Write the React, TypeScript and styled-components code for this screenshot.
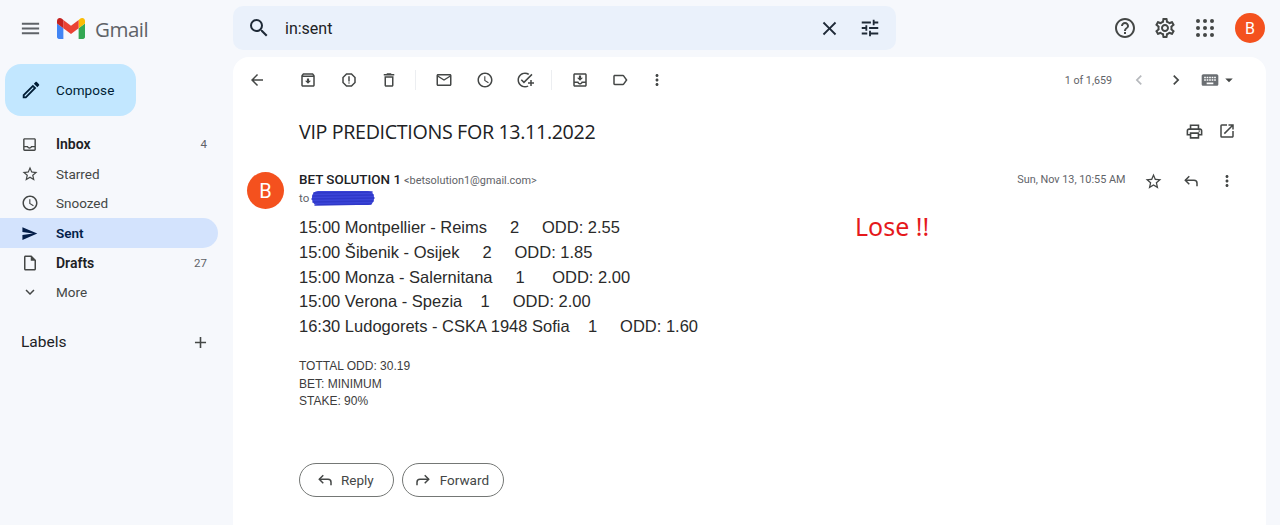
import React from "react";
import styled, { createGlobalStyle } from "styled-components";
import {
  MdMenu, MdSearch, MdClose, MdTune, MdHelpOutline, MdOutlineSettings,
  MdArrowBack, MdOutlineArchive, MdOutlineReport, MdOutlineDelete, MdOutlineEmail,
  MdOutlineWatchLater, MdOutlineAddTask, MdOutlineMoveToInbox, MdOutlineLabel,
  MdMoreVert, MdChevronLeft, MdChevronRight, MdKeyboard, MdArrowDropDown,
  MdOutlinePrint, MdOpenInNew, MdStarBorder, MdOutlineEdit, MdOutlineInbox,
  MdSend, MdOutlineInsertDriveFile, MdExpandMore, MdAdd,
} from "react-icons/md";

const Global = createGlobalStyle`
  html, body { margin: 0; padding: 0; height: 100%; overflow: hidden; }
  body { background: #f6f8fc; font-family: Roboto, "Liberation Sans", sans-serif; color: #202124; }
`;

const Page = styled.div`
  width: 1280px;
  height: 525px;
  overflow: hidden;
  display: grid;
  grid-template-columns: 233px 1033px 14px;
  grid-template-rows: 57px 468px;
  background: #f6f8fc;
`;

const Brand = styled.div`
  display: flex;
  align-items: center;
  height: 57px;
  padding-left: 19px;
  color: #5f6368;
`;

const LogoBox = styled.div`
  display: flex;
  margin-left: 15px;
`;

const Wordmark = styled.span`
  margin-left: 10px;
  font-family: "Open Sans", Roboto, sans-serif;
  font-size: 20.5px;
  letter-spacing: -0.5px;
  color: #5f6368;
`;

const SearchBar = styled.div`
  height: 44px;
  width: 663px;
  margin-top: 6px;
  background: #eaf1fb;
  border-radius: 10px;
  display: flex;
  align-items: center;
  padding: 0 15px 0 14px;
  box-sizing: border-box;
  color: #1f2a37;
`;

const SearchText = styled.span`
  flex: 1;
  margin-left: 14px;
  font-size: 16px;
  color: #202124;
`;

const CloseWrap = styled.span`
  display: flex;
  margin-right: -1px;
`;

const TuneWrap = styled.span`
  display: flex;
  margin-left: 19px;
`;

const TopRight = styled.div`
  grid-column: 2 / 4;
  grid-row: 1;
  display: flex;
  align-items: flex-start;
`;

const TopIcons = styled.div`
  margin-left: auto;
  margin-right: 15px;
  margin-top: 13px;
  display: flex;
  align-items: center;
  gap: 16px;
  color: #444746;
`;

const AccountAvatar = styled.div`
  width: 30px;
  height: 30px;
  margin-left: 2px;
  border-radius: 50%;
  background: #f4511e;
  color: #fff;
  font-size: 16px;
  display: flex;
  align-items: center;
  justify-content: center;
`;

const Sidebar = styled.nav`
  display: flex;
  flex-direction: column;
  align-items: flex-start;
`;

const Compose = styled.div`
  width: 131px;
  height: 52px;
  margin: 7px 0 13.5px 5px;
  border-radius: 16px;
  background: #c2e7ff;
  color: #001d35;
  display: flex;
  align-items: center;
  padding: 0 0 1px 15px;
  box-sizing: border-box;
  font-size: 13.5px;
  font-weight: 400;
  gap: 14px;
  letter-spacing: 0.1px;
`;

const NavRow = styled.div<{ $active?: boolean; $bold?: boolean }>`
  width: 218px;
  height: 29.6px;
  display: flex;
  align-items: center;
  padding: 0 11px 0 21px;
  box-sizing: border-box;
  border-radius: 0 15px 15px 0;
  background: ${(p) => (p.$active ? "#d3e3fd" : "transparent")};
  color: ${(p) => (p.$active ? "#041e49" : p.$bold ? "#202124" : "#444746")};
  font-size: ${(p) => (p.$bold ? 14 : 13.5)}px;
  font-weight: ${(p) => (p.$active || p.$bold ? 600 : 400)};
`;

const NavIcon = styled.span`
  width: 35px;
  display: flex;
  color: #444746;
`;

const SentIcon = styled(NavIcon)`
  color: #041e49;
`;

const NavLabel = styled.span`
  flex: 1;
`;

const Count = styled.span`
  font-size: 11.5px;
  font-weight: 400;
  color: #5f6368;
`;

const LabelsHead = styled.div`
  width: 218px;
  margin-top: 21px;
  padding: 0 8px 0 21px;
  box-sizing: border-box;
  display: flex;
  align-items: center;
  justify-content: space-between;
  font-size: 15.5px;
  color: #202124;
  height: 28px;
`;

const Panel = styled.main`
  background: #fff;
  border-radius: 16px 16px 0 0;
  display: flex;
  flex-direction: column;
`;

const Toolbar = styled.div`
  height: 46px;
  display: flex;
  align-items: center;
  padding-left: 15px;
  color: #444746;
`;

const ToolGroup = styled.div<{ $gap: number; $left: number }>`
  display: flex;
  align-items: center;
  gap: ${(p) => p.$gap}px;
  margin-left: ${(p) => p.$left}px;
`;

const Divider = styled.span`
  width: 1px;
  height: 20px;
  margin-left: 17px;
  background: #eceef1;
`;

const Pager = styled.div`
  margin-left: auto;
  margin-right: 28px;
  display: flex;
  align-items: center;
  font-size: 10.7px;
  color: #5f6368;
`;

const PagerText = styled.span`
  margin-right: 17px;
`;

const PagerIcon = styled.span<{ $faded?: boolean; $left?: number; $soft?: boolean }>`
  display: flex;
  margin-left: ${(p) => p.$left ?? 0}px;
  color: ${(p) => (p.$faded ? "#b6b9bd" : p.$soft ? "#6b6f73" : "#444746")};
`;

const SubjectRow = styled.div`
  display: flex;
  align-items: center;
  justify-content: space-between;
  height: 36px;
  margin-top: 10px;
  padding: 0 30px 0 66px;
`;

const Subject = styled.h1`
  margin: 0;
  font-family: "Open Sans", Roboto, sans-serif;
  font-weight: 400;
  font-size: 19.7px;
  letter-spacing: -0.35px;
  color: #202124;
`;

const SubjectIcons = styled.div`
  display: flex;
  align-items: center;
  gap: 14.5px;
  color: #444746;
`;

const MessageHead = styled.div`
  display: flex;
  margin-top: 22px;
  padding: 0 30px 0 14px;
`;

const SenderAvatar = styled.div`
  width: 37px;
  height: 37px;
  border-radius: 50%;
  background: #f4511e;
  color: #fff;
  font-size: 20px;
  display: flex;
  align-items: center;
  justify-content: center;
  margin-top: 1px;
  flex: none;
`;

const SenderBlock = styled.div`
  margin-left: 15px;
  flex: 1;
`;

const SenderLine = styled.div`
  font-size: 13.4px;
  line-height: 16px;
  margin-top: 1px;
`;

const SenderName = styled.strong`
  font-weight: 500;
  color: #202124;
`;

const SenderMail = styled.span`
  font-size: 10.9px;
  color: #5f6368;
  margin-left: 3px;
`;

const ToLine = styled.div`
  display: flex;
  align-items: center;
  font-size: 11.5px;
  color: #5f6368;
  height: 18px;
`;

const Scribble = styled.svg`
  margin-left: 2px;
  flex: none;
`;

const MetaRow = styled.div`
  display: flex;
  align-items: flex-start;
  gap: 18.5px;
  color: #444746;
`;

const DateText = styled.span`
  font-size: 10.85px;
  line-height: 16px;
  color: #5f6368;
  margin-top: 1px;
`;

const MetaIcon = styled.span`
  display: flex;
  margin-top: 1px;
`;

const BodyRow = styled.div`
  display: flex;
  margin-top: 6px;
  padding-left: 66px;
`;

const Lines = styled.div`
  width: 556px;
  font-family: "Liberation Sans", Arial, sans-serif;
  font-size: 16.5px;
  line-height: 24.75px;
  color: #2a2a2a;
  white-space: pre;
`;

const Lose = styled.div`
  font-family: "Noto Sans", "Open Sans", sans-serif;
  font-size: 25px;
  line-height: 24px;
  margin-top: -1px;
  color: #e5191c;
`;

const Summary = styled.div`
  margin: 19px 0 0 66px;
  font-family: "Liberation Sans", Arial, sans-serif;
  font-size: 12px;
  line-height: 17.8px;
  color: #3c3c3c;
`;

const Actions = styled.div`
  display: flex;
  gap: 8px;
  margin: 52px 0 0 66px;
`;

const ActionButton = styled.div<{ $l: number; $r: number; $g: number }>`
  height: 32px;
  border: 1px solid #747775;
  border-radius: 17px;
  display: flex;
  align-items: center;
  padding: 0 ${(p) => p.$r}px 0 ${(p) => p.$l}px;
  gap: ${(p) => p.$g}px;
  font-size: 13.5px;
  font-weight: 400;
  color: #444746;
`;

const Flip = styled.span`
  display: flex;
  transform: scaleX(-1);
`;

const GmailLogo = () => (
  <svg width="28" height="21" viewBox="52 42 88 66">
    <path fill="#4285f4" d="M58 108h14V74L52 59v43c0 3.32 2.69 6 6 6" />
    <path fill="#34a853" d="M120 108h14c3.32 0 6-2.69 6-6V59l-20 15" />
    <path fill="#fbbc04" d="M120 48v26l20-15v-8c0-7.42-8.47-11.65-14.4-7.2" />
    <path fill="#ea4335" d="M72 74V48l24 18 24-18v26L96 92" />
    <path fill="#c5221f" d="M52 51v8l20 15V48l-5.6-4.2c-5.94-4.45-14.4-.22-14.4 7.2" />
  </svg>
);

const ThinReply = ({ size = 18 }: { size?: number }) => (
  <svg width={size} height={size} viewBox="0 0 24 24" fill="none" stroke="currentColor" strokeWidth="2">
    <path d="M9.7 5.7 4.4 11l5.3 5.3" />
    <path d="M4.4 11H16c2.2 0 4 1.8 4 4v4" />
  </svg>
);

const DotGrid = () => (
  <svg width="24" height="24" viewBox="0 0 24 24" fill="currentColor">
    {[5, 12, 19].map((y) =>
      [5, 12, 19].map((x) => <circle key={`${x}-${y}`} cx={x} cy={y} r="2" />)
    )}
  </svg>
);

const rows = [
  "15:00 Montpellier - Reims     2     ODD: 2.55",
  "15:00 Šibenik - Osijek     2     ODD: 1.85",
  "15:00 Monza - Salernitana     1      ODD: 2.00",
  "15:00 Verona - Spezia    1     ODD: 2.00",
  "16:30 Ludogorets - CSKA 1948 Sofia    1     ODD: 1.60",
];

export default function App() {
  return (
    <Page>
      <Global />
      <Brand>
        <MdMenu size={23} />
        <LogoBox><GmailLogo /></LogoBox>
        <Wordmark>Gmail</Wordmark>
      </Brand>
      <TopRight>
        <SearchBar>
          <MdSearch size={24} />
          <SearchText>in:sent</SearchText>
          <CloseWrap><MdClose size={23} /></CloseWrap>
          <TuneWrap><MdTune size={22} /></TuneWrap>
        </SearchBar>
        <TopIcons>
          <MdHelpOutline size={24} />
          <MdOutlineSettings size={24} />
          <DotGrid />
          <AccountAvatar>B</AccountAvatar>
        </TopIcons>
      </TopRight>
      <Sidebar>
        <Compose><MdOutlineEdit size={22} />Compose</Compose>
        <NavRow $bold><NavIcon><MdOutlineInbox size={17} /></NavIcon><NavLabel>Inbox</NavLabel><Count>4</Count></NavRow>
        <NavRow><NavIcon><MdStarBorder size={18} /></NavIcon><NavLabel>Starred</NavLabel></NavRow>
        <NavRow><NavIcon><MdOutlineWatchLater size={18} /></NavIcon><NavLabel>Snoozed</NavLabel></NavRow>
        <NavRow $active><SentIcon><MdSend size={17} /></SentIcon><NavLabel>Sent</NavLabel></NavRow>
        <NavRow $bold><NavIcon><MdOutlineInsertDriveFile size={18} /></NavIcon><NavLabel>Drafts</NavLabel><Count>27</Count></NavRow>
        <NavRow><NavIcon><MdExpandMore size={18} /></NavIcon><NavLabel>More</NavLabel></NavRow>
        <LabelsHead>Labels<MdAdd size={19} color="#444746" /></LabelsHead>
      </Sidebar>
      <Panel>
        <Toolbar>
          <MdArrowBack size={18} />
          <ToolGroup $gap={22.5} $left={33}>
            <MdOutlineArchive size={18} />
            <MdOutlineReport size={18} />
            <MdOutlineDelete size={18} />
          </ToolGroup>
          <Divider />
          <ToolGroup $gap={22.5} $left={19}>
            <MdOutlineEmail size={18} />
            <MdOutlineWatchLater size={18} />
            <MdOutlineAddTask size={18} />
          </ToolGroup>
          <Divider />
          <ToolGroup $gap={22} $left={19}>
            <MdOutlineMoveToInbox size={18} />
            <MdOutlineLabel size={18} />
          </ToolGroup>
          <ToolGroup $gap={0} $left={18.5}>
            <MdMoreVert size={18} />
          </ToolGroup>
          <Pager>
            <PagerText>1 of 1,659</PagerText>
            <PagerIcon $faded><MdChevronLeft size={20} /></PagerIcon>
            <PagerIcon $left={17}><MdChevronRight size={20} /></PagerIcon>
            <PagerIcon $left={14} $soft><MdKeyboard size={20} /></PagerIcon>
            <PagerIcon><MdArrowDropDown size={18} /></PagerIcon>
          </Pager>
        </Toolbar>
        <SubjectRow>
          <Subject>VIP PREDICTIONS FOR 13.11.2022</Subject>
          <SubjectIcons>
            <MdOutlinePrint size={19} />
            <MdOpenInNew size={18} />
          </SubjectIcons>
        </SubjectRow>
        <MessageHead>
          <SenderAvatar>B</SenderAvatar>
          <SenderBlock>
            <SenderLine>
              <SenderName>BET SOLUTION 1</SenderName>
              <SenderMail>&lt;betsolution1@gmail.com&gt;</SenderMail>
            </SenderLine>
            <ToLine>
              to
              <Scribble width="64" height="20" viewBox="0 0 64 20">
                <rect x="1" y="3" width="62" height="14" rx="6" fill="#3b45d8" />
                <path
                  d="M3 5 L61 4 M2 8 L62 7 M1 11 L63 10 M2 14 L62 13 M4 17 L60 16"
                  stroke="#2f38c8"
                  strokeWidth="1.6"
                  strokeLinecap="round"
                  fill="none"
                />
              </Scribble>
            </ToLine>
          </SenderBlock>
          <MetaRow>
            <DateText>Sun, Nov 13, 10:55 AM</DateText>
            <MetaIcon><MdStarBorder size={19} /></MetaIcon>
            <MetaIcon><ThinReply /></MetaIcon>
            <MetaIcon><MdMoreVert size={18} /></MetaIcon>
          </MetaRow>
        </MessageHead>
        <BodyRow>
          <Lines>
            {rows.map((r) => (
              <div key={r}>{r}</div>
            ))}
          </Lines>
          <Lose>Lose !!</Lose>
        </BodyRow>
        <Summary>
          <div>TOTTAL ODD: 30.19</div>
          <div>BET: MINIMUM</div>
          <div>STAKE: 90%</div>
        </Summary>
        <Actions>
          <ActionButton $l={16} $r={19} $g={7}><ThinReply />Reply</ActionButton>
          <ActionButton $l={11} $r={14} $g={8}><Flip><ThinReply /></Flip>Forward</ActionButton>
        </Actions>
      </Panel>
    </Page>
  );
}
